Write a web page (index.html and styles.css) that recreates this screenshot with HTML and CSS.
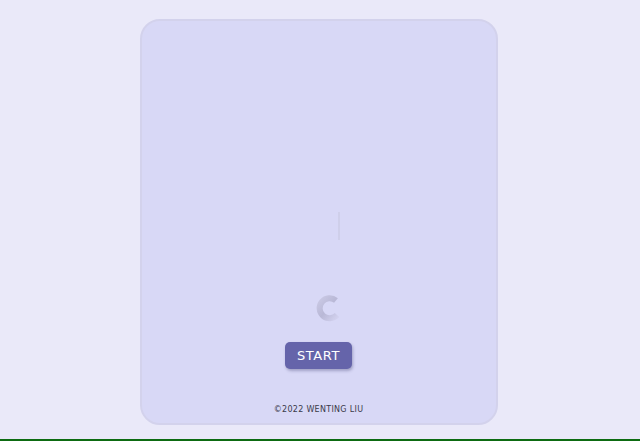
FILE: index.html
```html
<!DOCTYPE html>
<html>
<head>
<meta charset="utf-8">
<link rel="stylesheet" href="styles.css">
</head>
<body>
<main class="page">
  <section class="card">
    <div class="needle"></div>
    <svg class="spinner" width="28" height="28" viewBox="0 0 28 28">
      <defs>
        <linearGradient id="g" x1="0" y1="0" x2="1" y2="1">
          <stop offset="0" stop-color="#c9c8e4"/>
          <stop offset="0.5" stop-color="#b9b8d6"/>
          <stop offset="1" stop-color="#d2d1ee"/>
        </linearGradient>
      </defs>
      <path d="M21 6.5 A10 10 0 1 0 22 21" fill="none" stroke="url(#g)" stroke-width="6"/>
    </svg>
    <button class="start">START</button>
    <p class="copy">©2022 WENTING LIU</p>
  </section>
</main>
<div class="baseline"></div>
</body>
</html>
```
FILE: styles.css
```css
html, body {
  margin: 0;
  padding: 0;
}
body {
  height: 441px;
  display: flex;
  flex-direction: column;
  background: #eae9f9;
  font-family: "DejaVu Sans", sans-serif;
  overflow: hidden;
}
.page {
  flex: 1;
  display: flex;
  justify-content: center;
  padding-top: 19px;
}
.card {
  box-sizing: border-box;
  width: 358px;
  height: 406px;
  background: #d8d8f6;
  border: 2px solid #d3d2ec;
  border-radius: 20px;
  display: flex;
  flex-direction: column;
  align-items: center;
  padding-top: 191px;
  margin-left: -3px;
}
.needle {
  width: 2px;
  height: 28px;
  background: #cfcfea;
  margin-left: 40px;
}
.spinner {
  margin-top: 54px;
  margin-left: 20px;
  display: block;
}
.start {
  margin-top: 20px;
  width: 67px;
  height: 27px;
  border: none;
  border-radius: 5px;
  background: #6564aa;
  color: #fff;
  font-family: "DejaVu Sans", sans-serif;
  font-size: 13px;
  letter-spacing: 0.6px;
  padding: 0;
  box-shadow: 1px 2px 3px rgba(60, 60, 110, 0.35);
}
.copy {
  margin: 36px 0 0;
  font-size: 8px;
  color: #3a3a4a;
  letter-spacing: 0.3px;
}
.baseline {
  height: 2px;
  background: #0d6b12;
}
```
